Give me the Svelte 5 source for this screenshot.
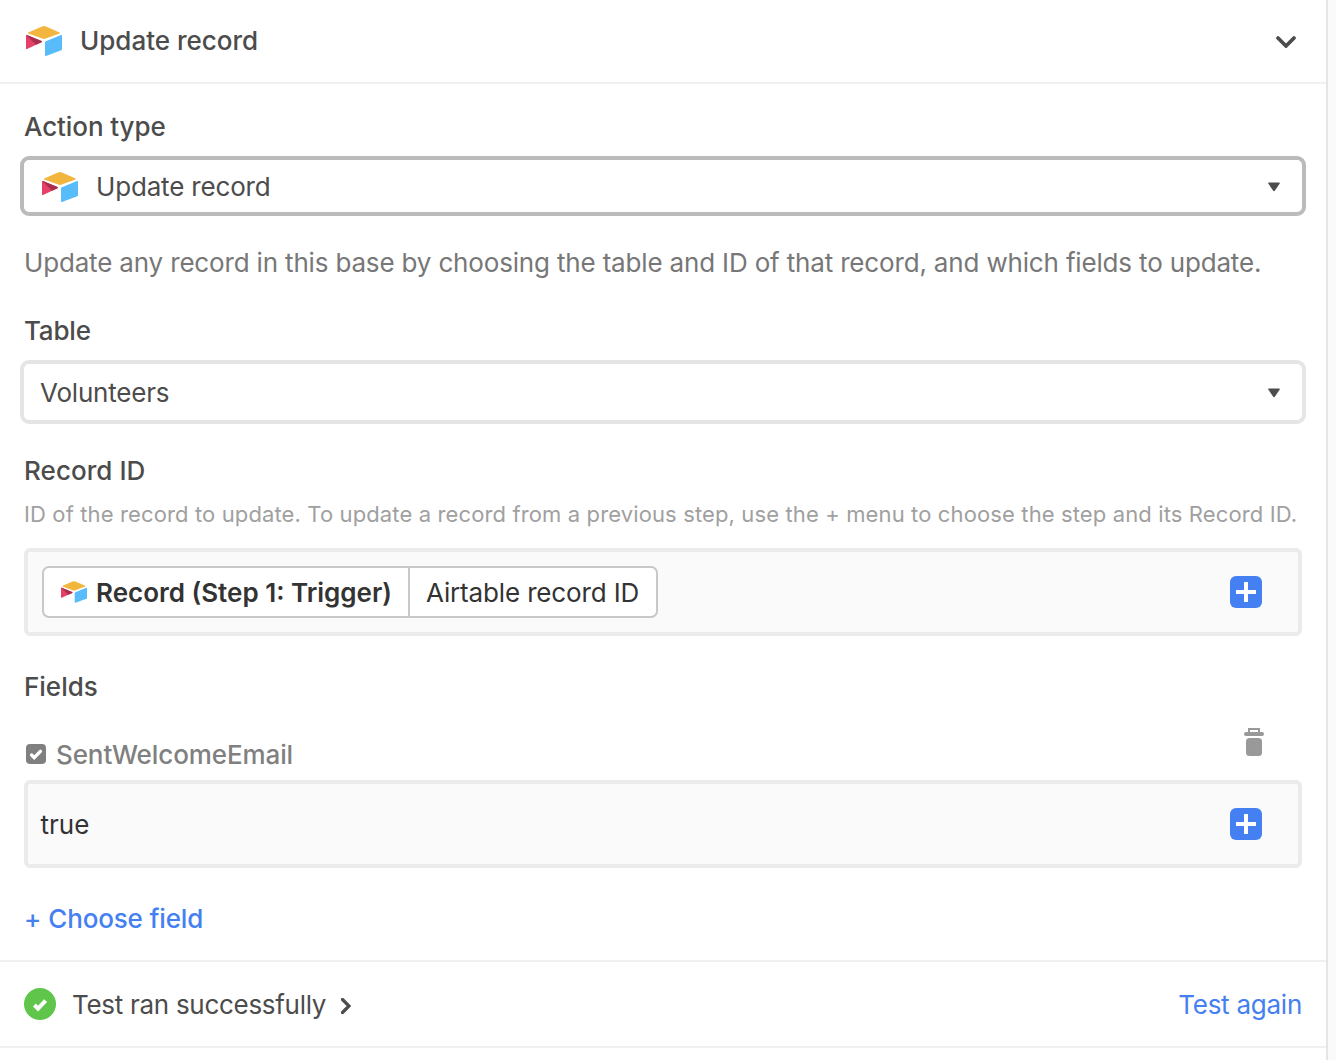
<script>
  const actionType = 'Update record';
  const table = 'Volunteers';
</script>

{#snippet logo(small)}
  <svg class="logo" class:small viewBox="0 0 36 30" aria-hidden="true">
    <path fill="#f2b63f" d="M2.200 6.400 16 .4q2-.7 4 0L33.600 6.500q.6.5 0 1L19 12.800q-1 .3-2 0L2.200 7.500q-.6-.5 0-1.100z" />
    <path fill="#57bcf9" d="M19 16.600q0-1 .9-1.400L35 9q1-.3 1 .6v13.600q0 .8-.8 1.100L20 29.900q-1 .3-1-.6z" />
    <path fill="#e6406a" d="M0 9.600q0-1 1-.6l14.500 6.100q1 .6 0 1.200L1 23q-1 .4-1-.6z" />
    <path fill="#a92e4e" d="M.3 9.100q.3-.3.7-.1l14.500 6.100q1 .6 0 1.200l-5.400 2.500z" />
  </svg>
{/snippet}

{#snippet caret()}
  <svg class="caret" viewBox="0 0 12 10" aria-hidden="true">
    <path d="M.8.5h10.400q1.100 0 .5 1L7 8.600q-1 1.200-2 0L.3 1.500q-.6-1 .5-1z" />
  </svg>
{/snippet}

{#snippet plus()}
  <button class="plus" aria-label="Insert value">
    <svg viewBox="0 0 32 32"><path d="M14.500 6h3q.5 0 .5.5V14h7.500q.5 0 .5.500v3q0 .5-.5.5H18v7.500q0 .5-.5.5h-3q-.5 0-.5-.5V18H6.500q-.5 0-.5-.5v-3q0-.5.5-.5H14V6.500q0-.5.5-.5z" /></svg>
  </button>
{/snippet}

<main class="panel">
  <header>
    {@render logo(false)}
    <h1>Update record</h1>
    <svg class="chevron-down" viewBox="0 0 20 12"><path d="m2 2 8 8 8-8" /></svg>
  </header>

  <section class="form">
    <h2 class="action-label">Action type</h2>
    <div class="select focused">
      {@render logo(false)}
      <span class="select-action">{actionType}</span>
      {@render caret()}
    </div>
    <p class="description">Update any record in this base by choosing the table and ID of that record, and which fields to update.</p>

    <h2 class="table-label">Table</h2>
    <div class="select tall">
      <span class="select-table">{table}</span>
      {@render caret()}
    </div>

    <h2 class="record-label">Record ID</h2>
    <p class="hint">ID of the record to update. To update a record from a previous step, use the + menu to choose the step and its Record ID.</p>
    <div class="input">
      <div class="token">
        <div class="source">{@render logo(true)}<strong>Record (Step 1: Trigger)</strong></div>
        <div class="value"><span>Airtable record ID</span></div>
      </div>
      {@render plus()}
    </div>

    <h2 class="fields-label">Fields</h2>
    <div class="field-head">
      <div class="field-name">
        <svg class="checkbox" viewBox="0 0 20 20">
          <rect width="20" height="20" rx="4" />
          <path d="m5.600 11 2.600 2.600 6.200-6.200" />
        </svg>
        <span>SentWelcomeEmail</span>
      </div>
      <svg class="trash" viewBox="0 0 20 28">
        <path class="handle" d="M5 5V1h10v4" />
        <rect y="4" width="20" height="4" rx="2" />
        <rect x="2" y="10" width="16" height="18" rx="3.500" />
      </svg>
    </div>
    <div class="input">
      <span class="text">true</span>
      {@render plus()}
    </div>
    <a class="choose" href="#choose"><span class="sign">+</span><span>Choose field</span></a>
  </section>

  <footer>
    <svg class="success" viewBox="0 0 32 32">
      <circle cx="16" cy="16" r="16" />
      <path d="m10.400 17 3.600 3.600 7.600-8" />
    </svg>
    <span class="result">Test ran successfully</span>
    <svg class="chevron-right" viewBox="0 0 10 16"><path d="m1.500 1.500 6.500 6.500-6.500 6.500" /></svg>
    <a class="again" href="#test">Test again</a>
  </footer>
</main>

<style>
  :global(body) {
    margin: 0;
    background: #fafafa;
  }
  .panel {
    box-sizing: border-box;
    width: 1328px;
    height: 1060px;
    overflow: hidden;
    background: #fff;
    border-right: 2px solid #e5e5e5;
    color: #4c4c4c;
    font: 400 26px/32px Inter, 'Liberation Sans', sans-serif;
  }
  h1, h2, p { margin: 0; }
  h1, h2 { font: inherit; font-weight: 500; white-space: nowrap; }
  a { text-decoration: none; color: #4480f2; }
  svg { display: block; flex: none; }
  .logo { width: 36px; height: 30px; }
  .logo.small { width: 26px; height: 22px; }

  header {
    display: flex;
    align-items: center;
    height: 82px;
    padding: 0 30px 0 26px;
    border-bottom: 2px solid #f0f0f0;
  }
  header h1 { margin-left: 18px; }
  .chevron-down { width: 20px; height: 12px; margin: 2px 0 0 auto; }
  .chevron-down path, .chevron-right path {
    fill: none;
    stroke: #4c4c4c;
    stroke-width: 3.700;
    stroke-linecap: round;
  }

  .form {
    display: flex;
    flex-direction: column;
    padding: 27px 24px 25px;
    border-bottom: 2px solid #f0f0f0;
  }
  .action-label { letter-spacing: -0.09px; }
  .select {
    box-sizing: border-box;
    display: flex;
    align-items: center;
    height: 60px;
    margin: 13px -4px 0;
    padding: 0 22px 0 18px;
    border: 4px solid #e5e5e5;
    border-radius: 9px;
    letter-spacing: -0.17px;
  }
  .select.focused { border-color: #bbb; }
  .select.tall { height: 64px; padding-left: 16px; letter-spacing: -0.2px; }
  .select span { padding-top: 1px; }
  .select .logo { margin-top: 1px; }
  .select-action { margin-left: 18px; }
  .caret { width: 12px; height: 10px; margin: 2px 0 0 auto; fill: #4c4c4c; }

  .description { margin-top: 29px; line-height: 36px; letter-spacing: -0.166px; color: #777; white-space: nowrap; }
  .table-label { margin-top: 34px; letter-spacing: -0.2px; }
  .record-label { margin-top: 31px; letter-spacing: 0.06px; }
  .hint { margin-top: 13px; font-size: 22px; line-height: 28px; letter-spacing: 0.125px; color: #a0a0a0; white-space: nowrap; }

  .input {
    box-sizing: border-box;
    display: flex;
    align-items: center;
    height: 88px;
    padding: 0 36px 0 14px;
    background: #fafafa;
    border: 4px solid #ebebeb;
    border-radius: 6px;
    color: #333;
  }
  .hint + .input { margin-top: 20px; }
  .field-head + .input { margin-top: 9px; }
  .text { margin-left: -1.500px; padding-top: 2px; }
  .plus {
    width: 32px;
    height: 32px;
    margin-left: auto;
    padding: 0;
    border: 0;
    border-radius: 6px;
    background: #4480f2;
  }
  .plus svg { width: 32px; height: 32px; fill: #fff; }

  .token {
    box-sizing: border-box;
    display: flex;
    width: 616px;
    height: 52px;
    border: 2px solid #c8c8c8;
    border-radius: 7px;
    background: #fff;
    white-space: nowrap;
  }
  .source, .value { display: flex; align-items: center; }
  .source { width: 347px; padding-left: 17px; gap: 9px; border-right: 2px solid #c8c8c8; }
  .source strong { font-weight: 600; padding-top: 1px; }
  .value { padding: 1px 0 0 16px; letter-spacing: -0.15px; }

  .fields-label { margin-top: 35px; }
  .field-head { display: flex; justify-content: space-between; height: 43px; margin-top: 25px; padding-right: 38px; }
  .field-name { display: flex; align-items: center; align-self: flex-end; gap: 10px; padding-left: 2px; color: #808080; font-weight: 500; letter-spacing: -0.1px; }
  .checkbox { width: 20px; height: 20px; margin-top: -2px; fill: #808080; }
  .checkbox path { fill: none; stroke: #fff; stroke-width: 3.400; stroke-linecap: round; }
  .trash { width: 20px; height: 28px; fill: #999; }
  .trash .handle { fill: none; stroke: #999; stroke-width: 2; }
  .choose { display: flex; gap: 7px; margin-top: 35px; font-weight: 500; letter-spacing: -0.15px; }

  footer {
    display: flex;
    align-items: center;
    height: 84px;
    padding: 0 24px;
    border-bottom: 2px solid #f0f0f0;
  }
  .success { width: 32px; height: 32px; fill: #5fc64b; }
  .success path { fill: none; stroke: #fff; stroke-width: 4; }
  .result { margin: 1px 0 0 16px; letter-spacing: -0.29px; }
  .chevron-right { width: 10px; height: 16px; margin: 4px 0 0 15px; }
  .chevron-right path { stroke-width: 3.200; }
  .again { margin: 1px 0 0 auto; letter-spacing: -0.25px; }
</style>
